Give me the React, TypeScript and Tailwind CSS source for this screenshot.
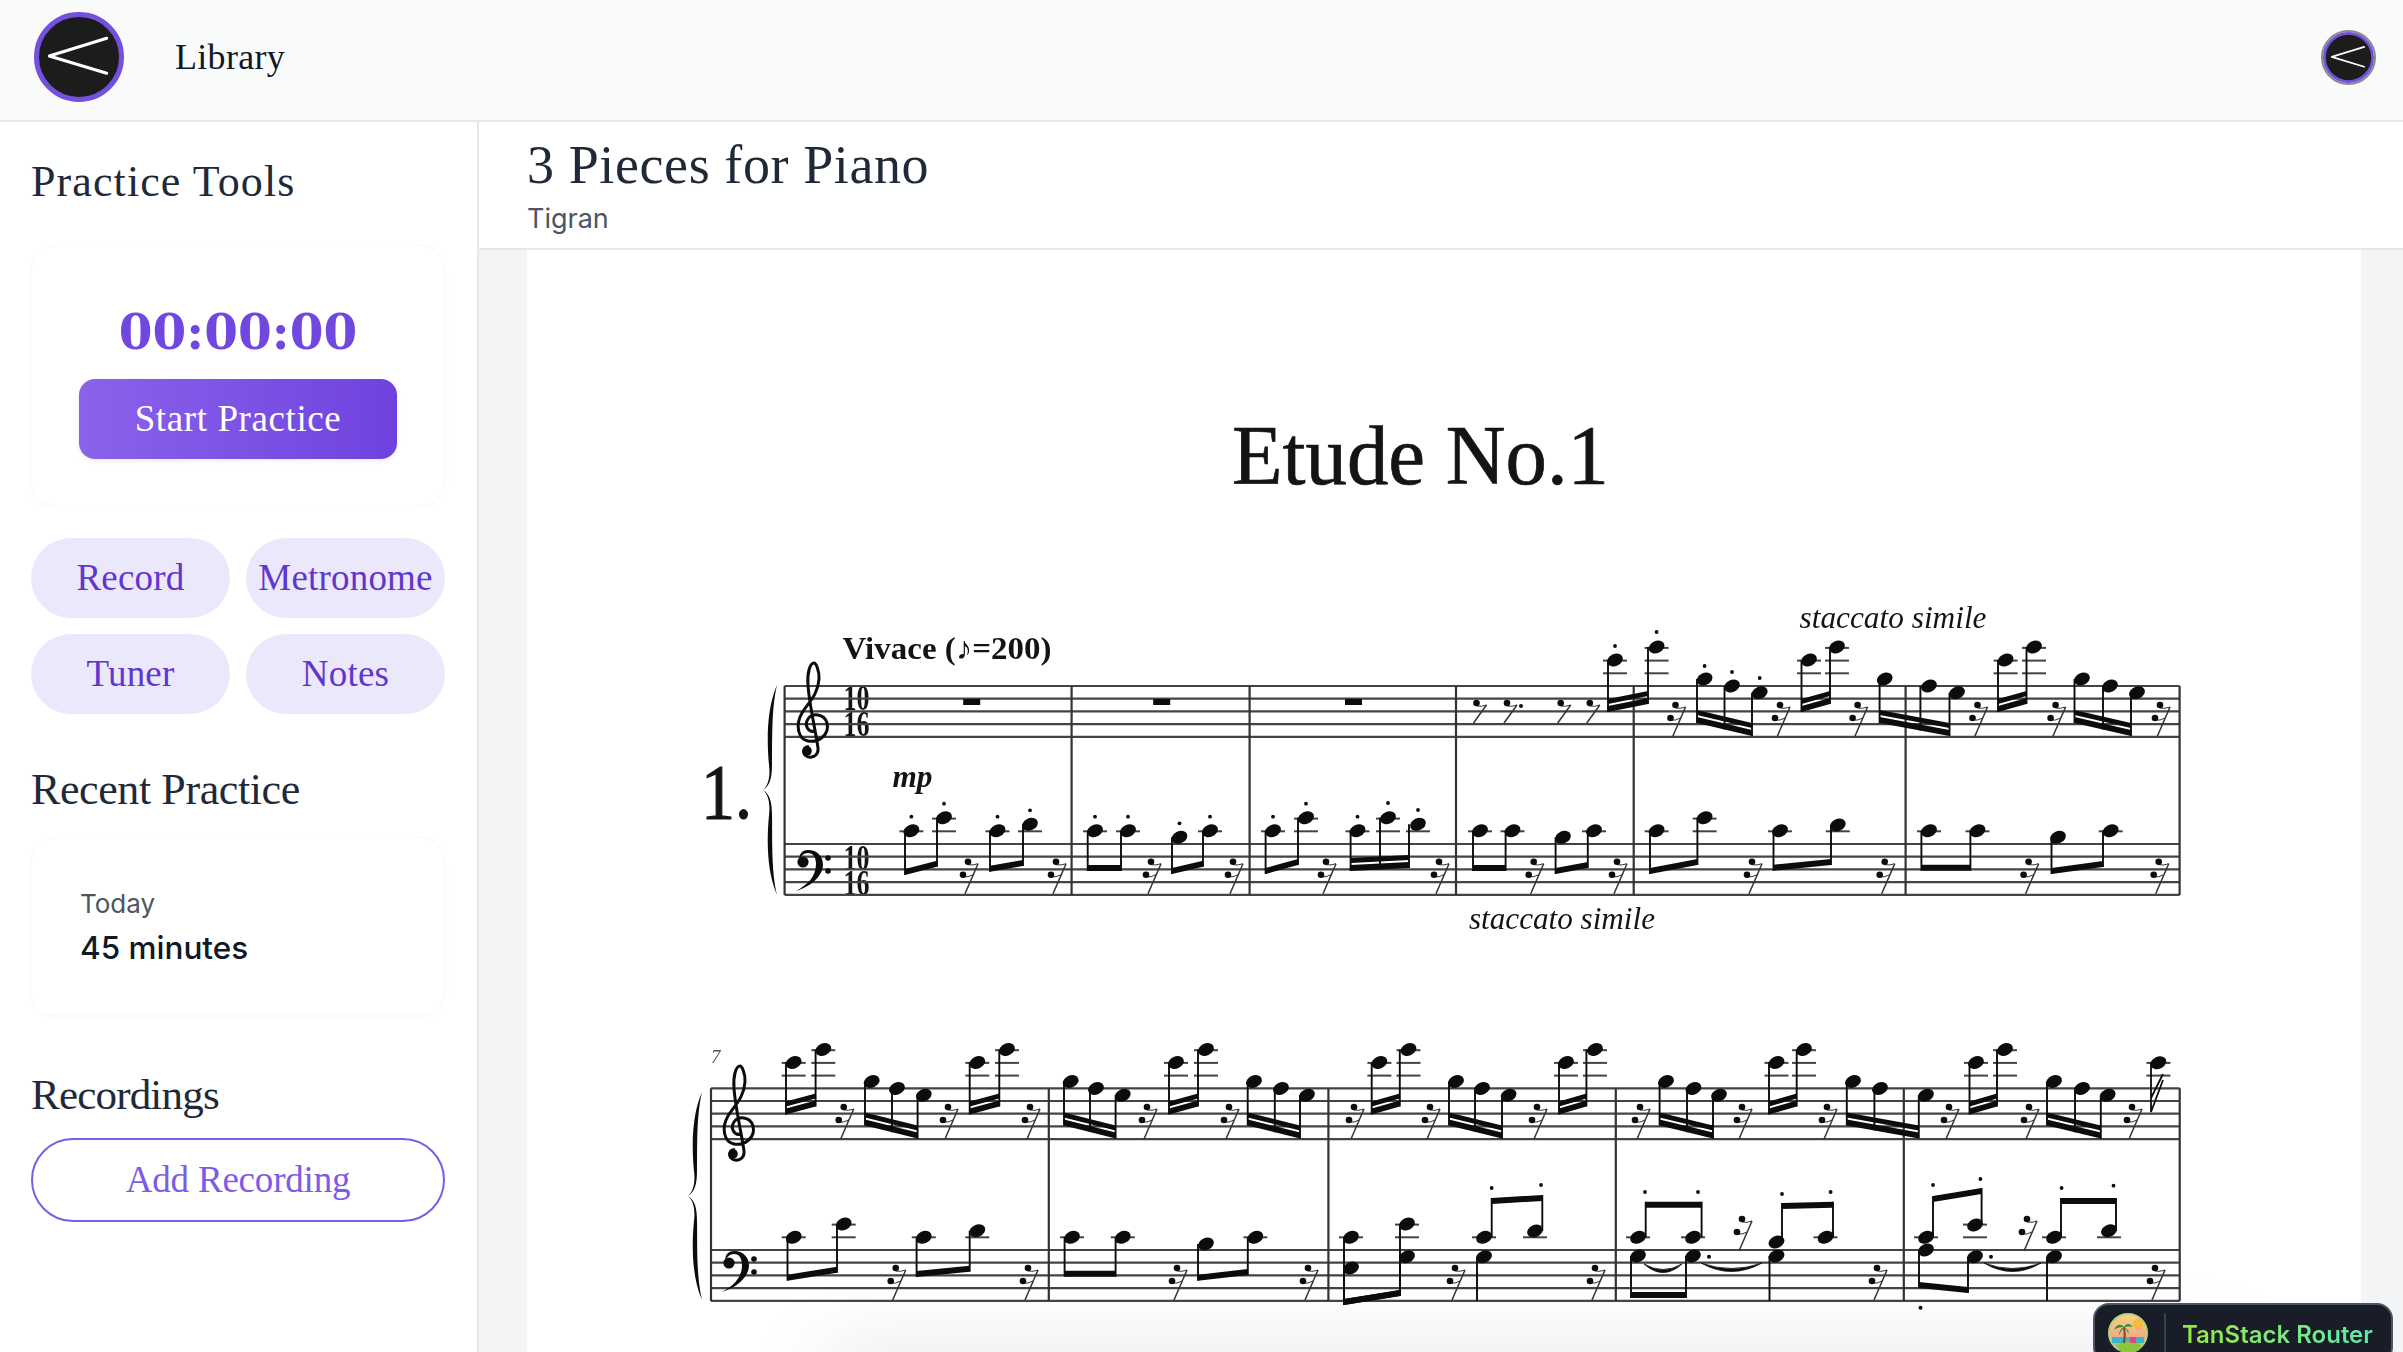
import React from "react";

type Pt = [number, number];

interface Group {
  n: Pt[];
  s: number[];
  b: [number, number];
  dbl?: boolean;
  dots?: Pt[];
}

const INK = "#0c0c0c";

// treble figures, offset from system 1 to system 2 is 402.5
const hi = (x1: number, x2: number, s1: number, s2: number, dy = 0): Group => ({
  n: [
    [x1, 660 + dy],
    [x2, 647 + dy],
  ],
  s: [s1, s2],
  b: [712 + dy, 704 + dy],
  dbl: true,
});

const lo = (xs: number[], ss: number[], dy = 0): Group => ({
  n: [
    [xs[0], 679 + dy],
    [xs[1], 686 + dy],
    [xs[2], 692.7 + dy],
  ],
  s: ss,
  b: [723 + dy, 736 + dy],
  dbl: true,
});

const DY = 402.5;

const trebleOne: Group[] = [
  { ...hi(1615, 1656.6, 1608, 1648), dots: [[1615, 646], [1656.6, 632]] },
  {
    ...lo([1704.6, 1732, 1759.7], [1697, 1724.5, 1752]),
    dots: [[1704.6, 666], [1732, 672], [1759.7, 678]],
  },
  hi(1809, 1837, 1801.5, 1830),
  lo([1884.7, 1929, 1957], [1879.6, 1920.4, 1949.5]),
  hi(2005.6, 2034, 1998, 2026.5),
  lo([2082, 2110, 2137], [2074.5, 2103, 2131]),
];

const trebleTwo: Group[] = [
  hi(793.7, 823.3, 786, 815.6, DY),
  lo([871.7, 897, 923.8], [865, 892, 917.6], DY),
  hi(977.3, 1007, 969.7, 999.3, DY),
  lo([1070.7, 1096, 1122.8], [1064, 1090, 1115.6], DY),
  hi(1176, 1206, 1169, 1198, DY),
  lo([1254, 1281, 1307], [1247.7, 1274.8, 1300], DY),
  hi(1379.4, 1408.5, 1371.7, 1399.8, DY),
  lo([1456, 1482, 1508.6], [1449, 1475, 1502], DY),
  hi(1566, 1595, 1559, 1586.4, DY),
  lo([1666, 1693.5, 1719], [1659.6, 1687, 1713], DY),
  hi(1776.5, 1804, 1769, 1796.7, DY),
  lo([1853, 1880, 1926], [1846.8, 1874.4, 1918.8], DY),
  hi(1976, 2005, 1969.5, 1997, DY),
  lo([2054, 2082, 2107.7], [2047, 2075, 2100.8], DY),
];

const pair = (
  a: Pt,
  b: Pt,
  s1: number,
  s2: number,
  y1: number,
  y2: number,
  dots = false,
): Group => ({
  n: [a, b],
  s: [s1, s2],
  b: [y1, y2],
  dots: dots ? [[a[0], a[1] - 14], [b[0], b[1] - 14]] : undefined,
});

const bassOne: Group[] = [
  pair([911.4, 830.7], [944, 817.7], 905, 937, 875, 866.7, true),
  pair([997.5, 830.7], [1030, 824.3], 990, 1023, 871.7, 866, true),
  pair([1095, 830.7], [1128, 830.7], 1087.7, 1121, 871, 871, true),
  pair([1179.5, 837.3], [1210, 830.7], 1172, 1203, 874, 866.7, true),
  pair([1273, 830.7], [1306, 817.7], 1265.6, 1298, 874, 865, true),
  {
    n: [[1357.5, 830.7], [1388, 817.7], [1418, 824.3]],
    s: [1350.6, 1380, 1409],
    b: [871, 868],
    dbl: true,
    dots: [[1357.5, 816.7], [1388, 803], [1418, 810]],
  },
  pair([1480, 830.7], [1512.5, 830.7], 1473, 1505.6, 871, 871),
  pair([1563, 837.3], [1594, 830.7], 1555.6, 1587.8, 874, 868),
  pair([1656.6, 830.7], [1704.6, 817.7], 1650, 1697.4, 874, 865),
  pair([1780, 830.7], [1837.8, 825], 1773.5, 1831, 870.7, 865),
  pair([1929, 830.7], [1977.5, 830.7], 1921.4, 1970.4, 870.7, 870.7),
  pair([2058, 837.3], [2110.7, 830.7], 2051.5, 2103, 874, 867),
];

const bassTwo: Group[] = [
  pair([793.7, 1237.3], [843.7, 1224], 787.5, 837, 1280.7, 1272.7),
  pair([923.8, 1237.3], [977.3, 1230.7], 916.6, 969.7, 1277, 1271.7),
  pair([1072, 1237.3], [1122.8, 1237.3], 1064.6, 1115.6, 1276.7, 1276.7),
  pair([1206, 1244], [1255.4, 1237.3], 1198, 1247.8, 1280.7, 1275),
  pair([1351, 1237.3], [1407, 1224], 1344, 1400, 1305, 1296),
  pair([1351, 1268], [1407, 1256.7], 1344, 1400, 1305, 1296),
  pair([1638, 1256], [1693, 1256], 1631, 1686, 1298, 1298),
  pair([1926, 1250], [1975, 1256.7], 1919, 1968, 1288, 1293),
];

// upper voice of the left hand, stems up from the right side of the head
const bassUp: Group[] = [
  pair([1484, 1237.3], [1535, 1231], 1491.7, 1542.3, 1198, 1195),
  pair([1638, 1237.3], [1693, 1237.3], 1645.7, 1701.6, 1201.7, 1201.7),
  pair([1776.5, 1242], [1825.5, 1237.3], 1782, 1833, 1203, 1201.7),
  pair([1926, 1237.3], [1975, 1225], 1933, 1981.6, 1196, 1188),
  pair([2054, 1237.3], [2109, 1230.7], 2061, 2116, 1198, 1198),
];

const upDots: Pt[] = [
  [1491.7, 1188], [1541, 1185], [1645, 1192], [1698, 1192], [1782, 1194],
  [1830.6, 1192], [1933, 1185], [1980.4, 1179], [2061.6, 1188], [2113.5, 1185.7],
];

const single: Pt[] = [[1484, 1256.7], [1776.5, 1256], [2054, 1256.7]];

const rests: Pt[] = [
  ...[1675.5, 1780, 1857.6, 1977.5, 2055.6, 2160].map((x): Pt => [x, 705]),
  ...[968, 1056, 1151, 1233, 1326, 1439, 1533.7, 1617, 1752, 1884.7, 2028.6, 2158.7].map((x): Pt => [x, 861.7]),
  ...[843.7, 948, 1030, 1147, 1229, 1354, 1430, 1537, 1640, 1742, 1827, 1949, 2029, 2132].map((x): Pt => [x, 1107]),
  ...[895.7, 1028, 1177, 1308, 1455, 1595, 1877, 2155].map((x): Pt => [x, 1268]),
  [1742, 1219],
  [2027, 1219],
];

function Ledgers({ x, y, top }: { x: number; y: number; top: number }) {
  const out = [];
  for (let l = top - 12.7; l >= y - 2; l -= 12.7) {
    out.push(<line key={l} x1={x - 12} x2={x + 12} y1={l} y2={l} stroke="#444" strokeWidth={2} />);
  }
  return <>{out}</>;
}

function Beamed({ g, top }: { g: Group; top: number }) {
  const [s0, s1] = [g.s[0], g.s[g.s.length - 1]];
  const at = (x: number) => g.b[0] + ((g.b[1] - g.b[0]) * (x - s0)) / (s1 - s0);
  return (
    <g>
      {g.n.map(([x, y], i) => (
        <g key={i}>
          <Ledgers x={x} y={y} top={top} />
          <line x1={g.s[i]} x2={g.s[i]} y1={y} y2={at(g.s[i])} stroke={INK} strokeWidth={1.9} />
          <ellipse cx={x} cy={y} rx={8.2} ry={6.1} fill={INK} transform={`rotate(-24 ${x} ${y})`} />
        </g>
      ))}
      {g.b[0] < top ? (
        <polygon points={`${s0},${g.b[0]} ${s1},${g.b[1]} ${s1},${g.b[1] + 6} ${s0},${g.b[0] + 6}`} fill={INK} />
      ) : (
        <polygon points={`${s0},${g.b[0]} ${s1},${g.b[1]} ${s1},${g.b[1] - 6} ${s0},${g.b[0] - 6}`} fill={INK} />
      )}
      {g.dbl && (
        <polygon points={`${s0},${g.b[0] - 8} ${s1},${g.b[1] - 8} ${s1},${g.b[1] - 13} ${s0},${g.b[0] - 13}`} fill={INK} />
      )}
      {g.dots?.map(([x, y], i) => <circle key={i} cx={x} cy={y} r={1.9} fill={INK} />)}
    </g>
  );
}

function Rest({ x, y, h = 32 }: { x: number; y: number; h?: number }) {
  return (
    <g>
      <path d={`M${x + 10} ${y + 2}L${x - 3} ${y + h}`} stroke="#333" strokeWidth={1.5} fill="none" />
      <path d={`M${x} ${y + 3}Q${x + 5} ${y + 4} ${x + 10} ${y + 2}`} stroke="#333" strokeWidth={1} fill="none" />
      <circle cx={x} cy={y} r={3.3} fill={INK} />
      {h > 25 && (
        <>
          <path d={`M${x - 5} ${y + 15}Q${x} ${y + 16} ${x + 5} ${y + 13}`} stroke="#333" strokeWidth={1} fill="none" />
          <circle cx={x - 5} cy={y + 13} r={3.3} fill={INK} />
        </>
      )}
    </g>
  );
}

function Staff({ x1, x2, y }: { x1: number; x2: number; y: number }) {
  return (
    <g>
      {[0, 1, 2, 3, 4].map((i) => (
        <line key={i} x1={x1} x2={x2} y1={y + i * 12.7} y2={y + i * 12.7} stroke="#444" strokeWidth={2.2} />
      ))}
    </g>
  );
}

function Brace({ x, top, h }: { x: number; top: number; h: number }) {
  const p = (fx: number, f: number) => `${x + fx} ${top + h * f}`;
  return (
    <path
      fill={INK}
      d={`M${p(14, 0)}C${p(3, 0.12)} ${p(4, 0.28)} ${p(6, 0.38)}C${p(7.5, 0.44)} ${p(5, 0.48)} ${p(0, 0.5)}C${p(5, 0.52)} ${p(7.5, 0.56)} ${p(6, 0.62)}C${p(4, 0.72)} ${p(3, 0.88)} ${p(14, 1)}C${p(8, 0.88)} ${p(9.5, 0.72)} ${p(9, 0.62)}C${p(9, 0.56)} ${p(7, 0.52)} ${p(0, 0.5)}C${p(7, 0.48)} ${p(9, 0.44)} ${p(9, 0.38)}C${p(9.5, 0.28)} ${p(8, 0.12)} ${p(14, 0)}Z`}
    />
  );
}

function TrebleClef({ x, y }: { x: number; y: number }) {
  return (
    <g transform={`translate(${x} ${y})`}>
      <path
        fill="none"
        stroke={INK}
        strokeWidth={3}
        d="M19 68C12 70 8 62 12 56C16 50 28 50 31 60C34 72 22 80 12 78C2 76-1 62 6 50C12 40 22 32 23 16C23.500 8 20 0 18 0C14 0 11 10 12 22C13 40 20 70 22 85C23 93 14 97 9 92C6 88 9 83 13 84"
      />
      <circle cx={11} cy={88} r={4.8} fill={INK} />
    </g>
  );
}

function BassClef({ x, y }: { x: number; y: number }) {
  return (
    <g transform={`translate(${x} ${y})`}>
      <path fill={INK} d="M1 40C12 34 21 26 21 13C21 5 17 2 13 2C8 2 5 6 5 9C3 4 7-1 13-1C22-1 28 5 28 14C27 27 14 36 1 40Z" />
      <circle cx={8} cy={11} r={5.6} fill={INK} />
      <circle cx={33} cy={7} r={2.8} fill={INK} />
      <circle cx={33} cy={20} r={2.8} fill={INK} />
    </g>
  );
}

function Tie({ x1, x2, y }: { x1: number; x2: number; y: number }) {
  const m = (x1 + x2) / 2;
  return <path d={`M${x1} ${y}Q${m} ${y + 17} ${x2} ${y}Q${m} ${y + 11} ${x1} ${y}Z`} fill={INK} stroke={INK} strokeWidth={0.8} />;
}

function Score() {
  const bars1 = [1071.6, 1249.6, 1456, 1633.7, 1905.6, 2179.6];
  const bars2 = [1048.8, 1328.4, 1615.8, 1903.8, 2179.7];
  return (
    <svg className="block blur-[0.6px]" width={1834} height={1102} viewBox="527 250 1834 1102">
      <g fontFamily="'Liberation Serif', serif" fill="#141414">
        <text x={1232} y={484} fontSize={84} textLength={377} lengthAdjust="spacingAndGlyphs" stroke="#141414" strokeWidth={0.7}>Etude No.1</text>
        <text x={842.5} y={659} fontSize={32} fontWeight={700} textLength={209} lengthAdjust="spacingAndGlyphs">Vivace (♪=200)</text>
        <text x={1799.5} y={628} fontSize={31} fontStyle="italic" textLength={187} lengthAdjust="spacingAndGlyphs">staccato simile</text>
        <text x={1469} y={929} fontSize={31} fontStyle="italic" textLength={186} lengthAdjust="spacingAndGlyphs">staccato simile</text>
        <text x={701} y={818} fontSize={78} textLength={51} lengthAdjust="spacingAndGlyphs" stroke="#141414" strokeWidth={1.2}>1.</text>
        <text x={892.5} y={787} fontSize={32} fontWeight={700} fontStyle="italic" textLength={40} lengthAdjust="spacingAndGlyphs">mp</text>
        <text x={711} y={1063} fontSize={19} fontStyle="italic" fill="#555">7</text>
        <text x={843.5} y={710} fontSize={35} fontWeight={700} textLength={26} lengthAdjust="spacingAndGlyphs">10</text>
        <text x={843.5} y={736} fontSize={35} fontWeight={700} textLength={26} lengthAdjust="spacingAndGlyphs">16</text>
        <text x={843.5} y={870} fontSize={35} fontWeight={700} textLength={26} lengthAdjust="spacingAndGlyphs">10</text>
        <text x={843.5} y={895} fontSize={35} fontWeight={700} textLength={26} lengthAdjust="spacingAndGlyphs">16</text>
      </g>

      <Staff x1={784.6} x2={2179.6} y={686} />
      <Staff x1={784.6} x2={2179.6} y={844} />
      <Staff x1={711} x2={2179.7} y={1088.3} />
      <Staff x1={711} x2={2179.7} y={1250} />

      {[784.6, ...bars1].map((x) => (
        <line key={x} x1={x} x2={x} y1={686} y2={895} stroke="#333" strokeWidth={2.2} />
      ))}
      {[711, ...bars2].map((x) => (
        <line key={x} x1={x} x2={x} y1={1088.3} y2={1301} stroke="#333" strokeWidth={2.2} />
      ))}

      <Brace x={763} top={685} h={210} />
      <Brace x={688} top={1092} h={208} />
      <TrebleClef x={796} y={663} />
      <BassClef x={795} y={851} />
      <TrebleClef x={722} y={1066} />
      <BassClef x={721} y={1252} />

      {[971.7, 1161.7, 1353.5].map((x) => (
        <rect key={x} x={x - 8.5} y={699} width={17} height={6} fill={INK} />
      ))}
      {[1476.5, 1507, 1560.7, 1589.8].map((x) => (
        <Rest key={x} x={x} y={703} h={20} />
      ))}
      <circle cx={1521} cy={706} r={2} fill={INK} />
      {rests.map(([x, y]) => (
        <Rest key={`${x}-${y}`} x={x} y={y} />
      ))}

      {trebleOne.map((g, i) => <Beamed key={i} g={g} top={686} />)}
      {trebleTwo.map((g, i) => <Beamed key={i} g={g} top={1088.3} />)}
      {bassOne.map((g, i) => <Beamed key={i} g={g} top={844} />)}
      {bassTwo.map((g, i) => <Beamed key={i} g={g} top={1250} />)}
      {bassUp.map((g, i) => <Beamed key={i} g={g} top={1250} />)}
      {upDots.map(([x, y]) => <circle key={x} cx={x} cy={y} r={1.9} fill={INK} />)}

      {single.map(([x, y]) => (
        <g key={x}>
          <ellipse cx={x} cy={y} rx={8.2} ry={6.1} fill={INK} transform={`rotate(-24 ${x} ${y})`} />
          <line x1={x - 7} x2={x - 7} y1={y} y2={1301} stroke={INK} strokeWidth={1.9} />
        </g>
      ))}

      <Tie x1={1644} x2={1682} y={1264} />
      <Tie x1={1701} x2={1762} y={1263} />
      <Tie x1={1984} x2={2041} y={1263} />
      <circle cx={1709} cy={1256.7} r={2} fill={INK} />
      <circle cx={1991} cy={1256.7} r={2} fill={INK} />
      <circle cx={1920.5} cy={1307.7} r={2} fill={INK} />

      {/* last note, flagged */}
      <Ledgers x={2158.4} y={1062.7} top={1088.3} />
      <ellipse cx={2158.4} cy={1062.7} rx={8.2} ry={6.1} fill={INK} transform="rotate(-24 2158.4 1062.7)" />
      <path d="M2151 1062V1112L2163 1080M2151 1098L2163 1074" stroke={INK} strokeWidth={1.8} fill="none" />
    </svg>
  );
}

function Logo({ size }: { size: number }) {
  return (
    <svg width={size} height={size} viewBox="0 0 90 90" className="block">
      <circle cx={45} cy={45} r={42.5} fill="#1c1c1c" stroke="#7350dd" strokeWidth={5} />
      <path d="M72.700 26.300L15.300 44L72.700 61.300" fill="none" stroke="#fff" strokeWidth={3} strokeLinecap="round" strokeLinejoin="round" />
    </svg>
  );
}

function IslandLogo() {
  return (
    <svg width={40} height={40} viewBox="0 0 40 40" className="block">
      <defs>
        <linearGradient id="sky" x1="0" y1="0" x2="0" y2="1">
          <stop offset="0" stopColor="#f6d77a" />
          <stop offset="0.65" stopColor="#f4a58c" />
          <stop offset="1" stopColor="#5fc4c4" />
        </linearGradient>
      </defs>
      <circle cx={20} cy={20} r={19} fill="url(#sky)" stroke="#b7d27c" strokeWidth={2} />
      <circle cx={30} cy={11} r={5} fill="#f6b93b" />
      <rect x={4} y={24} width={32} height={6} fill="#3fb4c4" />
      <ellipse cx={21} cy={34} rx={12} ry={5.500} fill="#8cc63f" />
      <path d="M16 30C17 24 17 19 16 14" stroke="#7a4a21" strokeWidth={2} fill="none" />
      <path d="M16 14C12 10 8 12 6 17C10 14 13 14 16 14C13 15 11 19 11 22C13 18 15 16 16 14C18 10 22 10 25 14C21 13 18 14 16 14C18 15 21 18 21 21C19 18 18 16 16 14Z" fill="#2f8f3a" />
      <path d="M22 24H28V30H22Z" fill="#e0467c" />
    </svg>
  );
}

export default function App() {
  return (
    <div className="relative flex h-[1352px] w-[2403px] flex-col overflow-hidden bg-white font-['Inter',sans-serif]">
      <header className="flex h-[122px] shrink-0 items-center justify-between border-b-2 border-[#e5e7eb] bg-[#f9fbfb] pb-[6px] pl-[34px] pr-[27px]">
        <div className="flex items-center">
          <Logo size={90} />
          <a className="ml-[51px] font-['Liberation_Serif',serif] text-[36px] tracking-[0.3px] text-[#111827]">Library</a>
        </div>
        <div className="rounded-full border-2 border-[#8c8c8c]">
          <Logo size={51} />
        </div>
      </header>

      <div className="flex min-h-0 flex-1">
        <aside className="w-[479px] shrink-0 border-r-2 border-[#e5e7eb] pl-[31px] pr-[32px] pt-[30px] font-['Liberation_Serif',serif]">
          <h2 className="h-[60px] text-[44px] leading-[60px] tracking-[1.1px] text-[#1f2937]">Practice Tools</h2>
          <div className="mt-[33px] flex h-[261px] flex-col items-center rounded-[24px] border border-[#fafafb] bg-white pt-[58px] shadow-[0_2px_8px_rgba(0,0,0,0.02)]">
            <div className="h-[56px] font-['DejaVu_Serif',serif] text-[48.500px] font-bold leading-[56px] text-[#7048e0]">00:00:00</div>
            <button className="mt-[19px] h-[80px] w-[318px] rounded-[16px] bg-linear-to-r from-[#8b62ea] to-[#6f42df] text-[37px] tracking-[0.6px] text-white shadow-[0_2px_4px_rgba(0,0,0,0.08)]">
              Start Practice
            </button>
          </div>

          <div className="mt-[32px] grid grid-cols-2 gap-4">
            {["Record", "Metronome", "Tuner", "Notes"].map((t) => (
              <button key={t} className="h-20 rounded-full bg-[#ece8fb] text-[37px] tracking-[0.2px] text-[#6136cf]">
                {t}
              </button>
            ))}
          </div>

          <h2 className="mt-[46px] h-[60px] text-[44px] leading-[60px] tracking-[-0.4px] text-[#1f2937]">Recent Practice</h2>
          <div className="mt-[17px] h-[179px] rounded-[24px] border border-[#fafafb] bg-white pl-[48px] pt-[48px] font-['Inter',sans-serif] shadow-[0_2px_8px_rgba(0,0,0,0.02)]">
            <div className="text-[26px] leading-[36px] text-[#4b5563]">Today</div>
            <div className="mt-2 text-[31.500px] font-medium leading-[36px] text-[#111827]">45 minutes</div>
          </div>

          <h2 className="mt-[49px] h-[60px] text-[43px] leading-[60px] tracking-[-0.8px] text-[#1f2937]">Recordings</h2>
          <button className="mt-[13px] h-[84px] w-full rounded-full border-2 border-[#7c5ce6] text-[37px] tracking-[-0.2px] text-[#7c5ce6]">
            Add Recording
          </button>
        </aside>

        <div className="flex min-w-0 flex-1 flex-col">
          <div className="h-[128px] shrink-0 border-b-2 border-[#e5e7eb] pl-[48px] pt-[10px]">
            <h1 className="font-['Liberation_Serif',serif] text-[54px] leading-[66px] tracking-[0.6px] text-[#1f2937]">3 Pieces for Piano</h1>
            <div className="mt-[3px] text-[27px] leading-[36px] text-[#4b5563]">Tigran</div>
          </div>
          <main className="min-h-0 flex-1 bg-[#f3f4f6] pl-[48px] pr-[42px]">
            <div className="relative h-full overflow-hidden bg-white">
              <Score />
              <div className="absolute bottom-[-80px] left-[300px] right-[120px] h-[80px] shadow-[0_0_90px_rgba(0,0,0,0.10)]" />
            </div>
          </main>
        </div>
      </div>

      <div className="absolute left-[2093px] top-[1303px] flex h-[60px] w-[300px] items-start rounded-[16px] border-2 border-[#4b5563] bg-[#191d27] pl-[13px] pt-[8px]">
        <IslandLogo />
        <div className="ml-[16px] h-[50px] w-[2px] bg-[#374151]" />
        <span className="ml-[16px] mt-[7px] bg-linear-to-r from-[#9ae63c] to-[#5ee8a8] bg-clip-text text-[24px] font-semibold leading-[30px] text-transparent">
          TanStack Router
        </span>
      </div>
    </div>
  );
}
